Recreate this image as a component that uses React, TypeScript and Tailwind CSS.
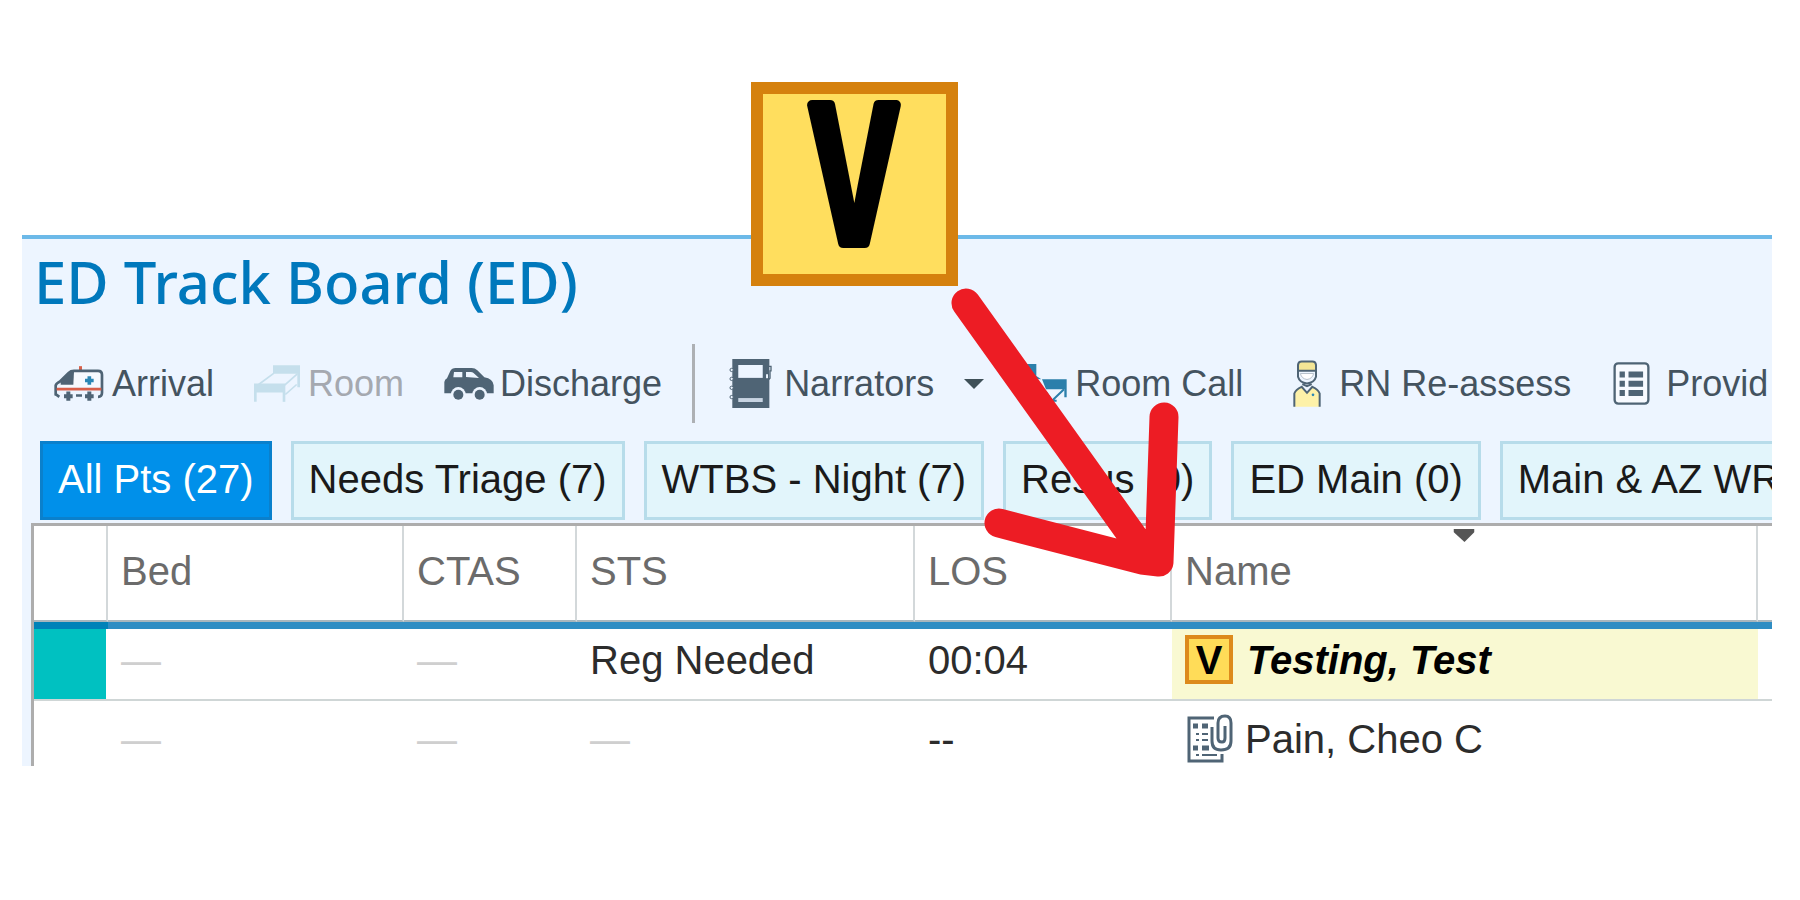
import type { ReactNode } from "react";

const SLATE = "#4f6475";
const PANEL = "#edf5ff";

const AmbulanceIcon = () => (
  <svg viewBox="0 0 150 104" className="w-[50px] h-[35px] shrink-0" fill="none">
    <rect x="75" y="0" width="9" height="12" fill="#d9604a" />
    <path d="M62 18H138V64H20V50Z" fill="#f6faff" />
    <path d="M5 88V58Q6 52 18 46L44 20Q50 14 60 14H132Q144 14 144 26V80Q144 92 132 92" stroke={SLATE} strokeWidth="8" />
    <path d="M60 16H50L20 46V56H58Z" fill={SLATE} />
    <path d="M8 69H142" stroke="#d9604a" strokeWidth="8" />
    <path d="M106 30V56M93 43H119" stroke="#2b87b5" strokeWidth="11" />
    <path d="M43 76V104M30 90H56M106 76V104M93 90H119" stroke={SLATE} strokeWidth="12" />
    <path d="M66 88H84M5 84L16 92" stroke={SLATE} strokeWidth="8" />
  </svg>
);

const BedIcon = () => (
  <svg viewBox="0 0 138 110" className="w-[46px] h-[37px] shrink-0" fill="#c5dfec">
    <path d="M57 0H138V66H130V26H57Z" />
    <path d="M0 55H94V82H8V110H0Z" />
    <path d="M86 80H94V110H86Z" />
    <path d="M60 24L14 58M130 26L92 60M128 58L94 88" stroke="#c5dfec" strokeWidth="5" />
  </svg>
);

const CarIcon = () => (
  <svg viewBox="0 0 148 96" className="w-[50px] h-[32px] shrink-0" fill={SLATE}>
    <path d="M0 76V42Q1 34 8 31L18 9Q22 0 34 0H82Q92 0 99 7L120 28Q146 32 148 52V76Z" />
    <path d="M29 12H54V28H27ZM65 12H80Q86 12 91 18L104 30L65 27Z" fill={PANEL} />
    <circle cx="42" cy="79" r="22" fill={PANEL} />
    <circle cx="106" cy="79" r="22" fill={PANEL} />
    <circle cx="42" cy="80" r="15" />
    <circle cx="106" cy="80" r="15" />
  </svg>
);

const NotebookIcon = () => (
  <svg viewBox="0 0 130 148" className="w-[43px] h-[49px] shrink-0" fill={SLATE}>
    <path d="M10 0H122V148H10Z" />
    <path d="M28 18H102V57H28Z" fill={PANEL} />
    <path d="M28 118H102V130H28Z" fill="#c8d4e2" />
    <path d="M120 22H127V36H124V58L120 62" fill="none" stroke={SLATE} strokeWidth="4" />
    <path d="M112 46H118V58H112Z" fill={PANEL} />
    {[33, 60, 87, 115].map((cy) => (
      <circle key={cy} cx="8" cy={cy} r="5" fill={PANEL} stroke={SLATE} strokeWidth="3" />
    ))}
  </svg>
);

const RoomCallIcon = () => (
  <svg viewBox="0 0 153 120" className="w-[51px] h-[40px] shrink-0" fill="#2b7fab">
    <path d="M20 0H61V36L76 46L61 44H30Z" />
    <path d="M78 46H152V100H145V76H90Z" />
    <path d="M144 76L108 110M90 84L108 110H122" fill="none" stroke="#2b7fab" strokeWidth="6" />
  </svg>
);

const NurseIcon = () => (
  <svg viewBox="0 0 84 140" className="w-[28px] h-[47px] shrink-0" stroke={SLATE} strokeWidth="6" fill="none">
    <path d="M15 32V14Q16 4 26 4H58Q68 4 69 14V32Z" fill="#f3e595" />
    <path d="M15 30V50Q20 68 42 70Q64 68 69 50V30" />
    <path d="M22 40H62Q58 56 42 58Q26 56 22 40Z" fill="#fff" stroke="#b8c2cc" strokeWidth="3" />
    <path d="M4 140V100Q8 88 26 80L42 98L58 80Q76 88 80 100V140" fill="#fdf1a8" />
    <path d="M28 72L42 78L56 72" />
    <circle cx="60" cy="104" r="4" fill="#2b87b5" stroke="none" />
  </svg>
);

const ListIcon = () => (
  <svg viewBox="0 0 110 130" className="w-[37px] h-[43px] shrink-0" fill={SLATE}>
    <rect x="4" y="4" width="102" height="122" rx="11" fill="#f7faff" stroke={SLATE} strokeWidth="7" />
    {[29, 57, 85].map((y) => (
      <path key={y} d={`M19 ${y}H35V${y + 18}H19ZM46 ${y}H90V${y + 18}H46Z`} />
    ))}
  </svg>
);

const AttachmentIcon = () => (
  <svg viewBox="0 0 46 50" className="w-[46px] h-[50px] shrink-0" fill="none" stroke={SLATE} strokeWidth="2">
    <path d="M27 4H2V47H35V40" strokeWidth="3" />
    <path d="M6 12H11M15 12H21M6 34H11M15 34H22" strokeWidth="5" />
    <path d="M9 20H12M15 20H21M9 26H12M15 26H21M9 41H12M15 41H30" />
    <path d="M25 13V27Q25 36 34 36Q44 36 44 27V9Q44 2 38 2Q31 2 31 9V24Q31 28 35 28Q38 28 38 24V12" strokeWidth="3" />
  </svg>
);

interface Action {
  label: string;
  icon: ReactNode;
  className: string;
}

const LEFT_ACTIONS: Action[] = [
  { label: "Arrival", icon: <AmbulanceIcon />, className: "gap-2" },
  { label: "Room", icon: <BedIcon />, className: "gap-2 text-[#a5a9b0]" },
  { label: "Discharge", icon: <CarIcon />, className: "gap-1.5" },
];

const RIGHT_ACTIONS: Action[] = [
  { label: "Room Call", icon: <RoomCallIcon />, className: "ml-8 gap-2" },
  { label: "RN Re-assess", icon: <NurseIcon />, className: "ml-[50px] gap-[18px]" },
  { label: "Provid", icon: <ListIcon />, className: "ml-[42px] gap-4" },
];

const TABS = [
  "All Pts (27)",
  "Needs Triage (7)",
  "WTBS - Night (7)",
  "Resus (0)",
  "ED Main (0)",
  "Main & AZ WR",
];

const COLUMNS = ["", "Bed", "CTAS", "STS", "LOS", "Name", ""];

const Empty = () => <span className="text-[#cfcfcf]">—</span>;

const Toolbar = () => (
  <div className="flex h-[79px] items-center pl-8 text-[36px] leading-[48px] text-[#44535f]">
    <div className="flex gap-10">
      {LEFT_ACTIONS.map(({ label, icon, className }) => (
        <button key={label} disabled={label === "Room"} className={`flex items-center ${className}`}>
          {icon}
          {label}
        </button>
      ))}
    </div>
    <div className="ml-[30px] h-full w-[3px] shrink-0 bg-[#adb0b4]" />
    <button className="ml-[34px] flex items-center gap-3">
      <NotebookIcon />
      Narrators
      <svg viewBox="0 0 20 10" className="ml-[18px] h-[10px] w-5" fill="#3f5058">
        <path d="M0 0H20L10 10Z" />
      </svg>
    </button>
    {RIGHT_ACTIONS.map(({ label, icon, className }) => (
      <button key={label} className={`flex shrink-0 items-center whitespace-nowrap ${className}`}>
        {icon}
        {label}
      </button>
    ))}
  </div>
);

const Tabs = () => (
  <div className="mt-[18px] flex gap-[19px] pl-[18px]">
    {TABS.map((tab, i) => (
      <button
        key={tab}
        className={`h-[79px] shrink-0 border-3 px-[15px] pb-1 text-[40px] leading-[48px] whitespace-nowrap ${
          i === 0
            ? "border-[#0a80cc] bg-[#0090ea] text-white"
            : "border-[#b7dcea] bg-[#e2f5fb] text-[#1a1a1a]"
        }`}
      >
        {tab}
      </button>
    ))}
  </div>
);

const PatientTable = () => (
  <div className="mt-[3px] ml-[9px] border-t-3 border-l-3 border-[#adadad] bg-white">
    <table className="w-full table-fixed border-separate border-spacing-0 text-left text-[40px] leading-[50px] text-[#2c2c2c]">
      <colgroup>
        <col className="w-[74px]" />
        <col className="w-[296px]" />
        <col className="w-[173px]" />
        <col className="w-[338px]" />
        <col className="w-[257px]" />
        <col className="w-[586px]" />
        <col />
      </colgroup>
      <thead>
        <tr className="h-[96px] text-[#6b6b6b]">
          {COLUMNS.map((column, i) => (
            <th
              key={i}
              className={`relative border-b-2 border-b-[#a9b6bd] px-[13px] pb-1 font-normal ${
                i < 6 ? "border-r-2 border-r-[#d3d8da]" : ""
              }`}
            >
              {column}
              {column === "Name" && (
                <svg viewBox="0 0 21 13" className="absolute top-[3px] left-1/2 h-[13px] w-[21px] -translate-x-1/2" fill="#555">
                  <path d="M0 0H21V3L11 13L0 3Z" />
                </svg>
              )}
            </th>
          ))}
        </tr>
      </thead>
      <tbody>
        <tr className="h-[79px] align-top *:border-t-7 *:border-b-2 *:border-t-[#2f8dc3] *:border-b-[#cfd6d6] *:px-[13px] *:pt-[6px]">
          <td className="border-t-[#0082b8]! bg-[#00c1c1] bg-clip-padding shadow-[inset_-2px_0_0_white]" />
          <td><Empty /></td>
          <td><Empty /></td>
          <td>Reg Needed</td>
          <td>00:04</td>
          <td className="bg-[#f9f9d2] bg-clip-padding">
            <div className="flex gap-[14px] font-bold text-black italic">
              <span className="flex h-[49px] w-12 items-center justify-center border-4 border-[#dd8a1c] bg-[#ffdc58] not-italic">
                V
              </span>
              Testing, Test
            </div>
          </td>
          <td />
        </tr>
        <tr className="h-[65px] align-top *:px-[13px] *:pt-[13px]">
          <td />
          <td><Empty /></td>
          <td><Empty /></td>
          <td><Empty /></td>
          <td>--</td>
          <td>
            <div className="flex gap-3 pl-[2px]">
              <AttachmentIcon />
              Pain, Cheo C
            </div>
          </td>
          <td />
        </tr>
      </tbody>
    </table>
  </div>
);

const Callout = () => (
  <>
    <div className="absolute top-[82px] left-[751px] h-[204px] w-[207px] border-12 border-[#d5810e] bg-[#ffde5e]">
      <svg viewBox="0 0 183 180" className="h-full w-full">
        <text
          x="91"
          y="149"
          textAnchor="middle"
          className="font-['Noto_Sans_Mono_CJK_SC','Noto_Sans_CJK_SC',sans-serif] text-[188px]"
          stroke="#000"
          strokeWidth="10"
          strokeLinejoin="round"
        >
          V
        </text>
      </svg>
    </div>
    <svg
      viewBox="0 0 240 310"
      className="pointer-events-none absolute top-[280px] left-[950px] h-[310px] w-[240px]"
      fill="none"
      stroke="#ed1c24"
      strokeWidth="29"
      strokeLinecap="round"
      strokeLinejoin="round"
    >
      <path d="M16 23L199 279M49 243L192 280L209 282L214 137" />
    </svg>
  </>
);

export default function App() {
  return (
    <div className="relative min-h-screen bg-white pt-[235px] pr-7 pl-[22px] font-['Liberation_Sans',Arial,sans-serif]">
      <main className="overflow-hidden border-t-4 border-[#6cb9e8] bg-[#edf5ff]">
        <h1 className="h-[105px] pt-[3px] pl-3 font-['Noto_Sans',sans-serif] text-[58px] leading-[80px] font-medium text-[#0078bc]">
          ED Track Board (ED)
        </h1>
        <Toolbar />
        <Tabs />
        <PatientTable />
      </main>
      <Callout />
    </div>
  );
}
